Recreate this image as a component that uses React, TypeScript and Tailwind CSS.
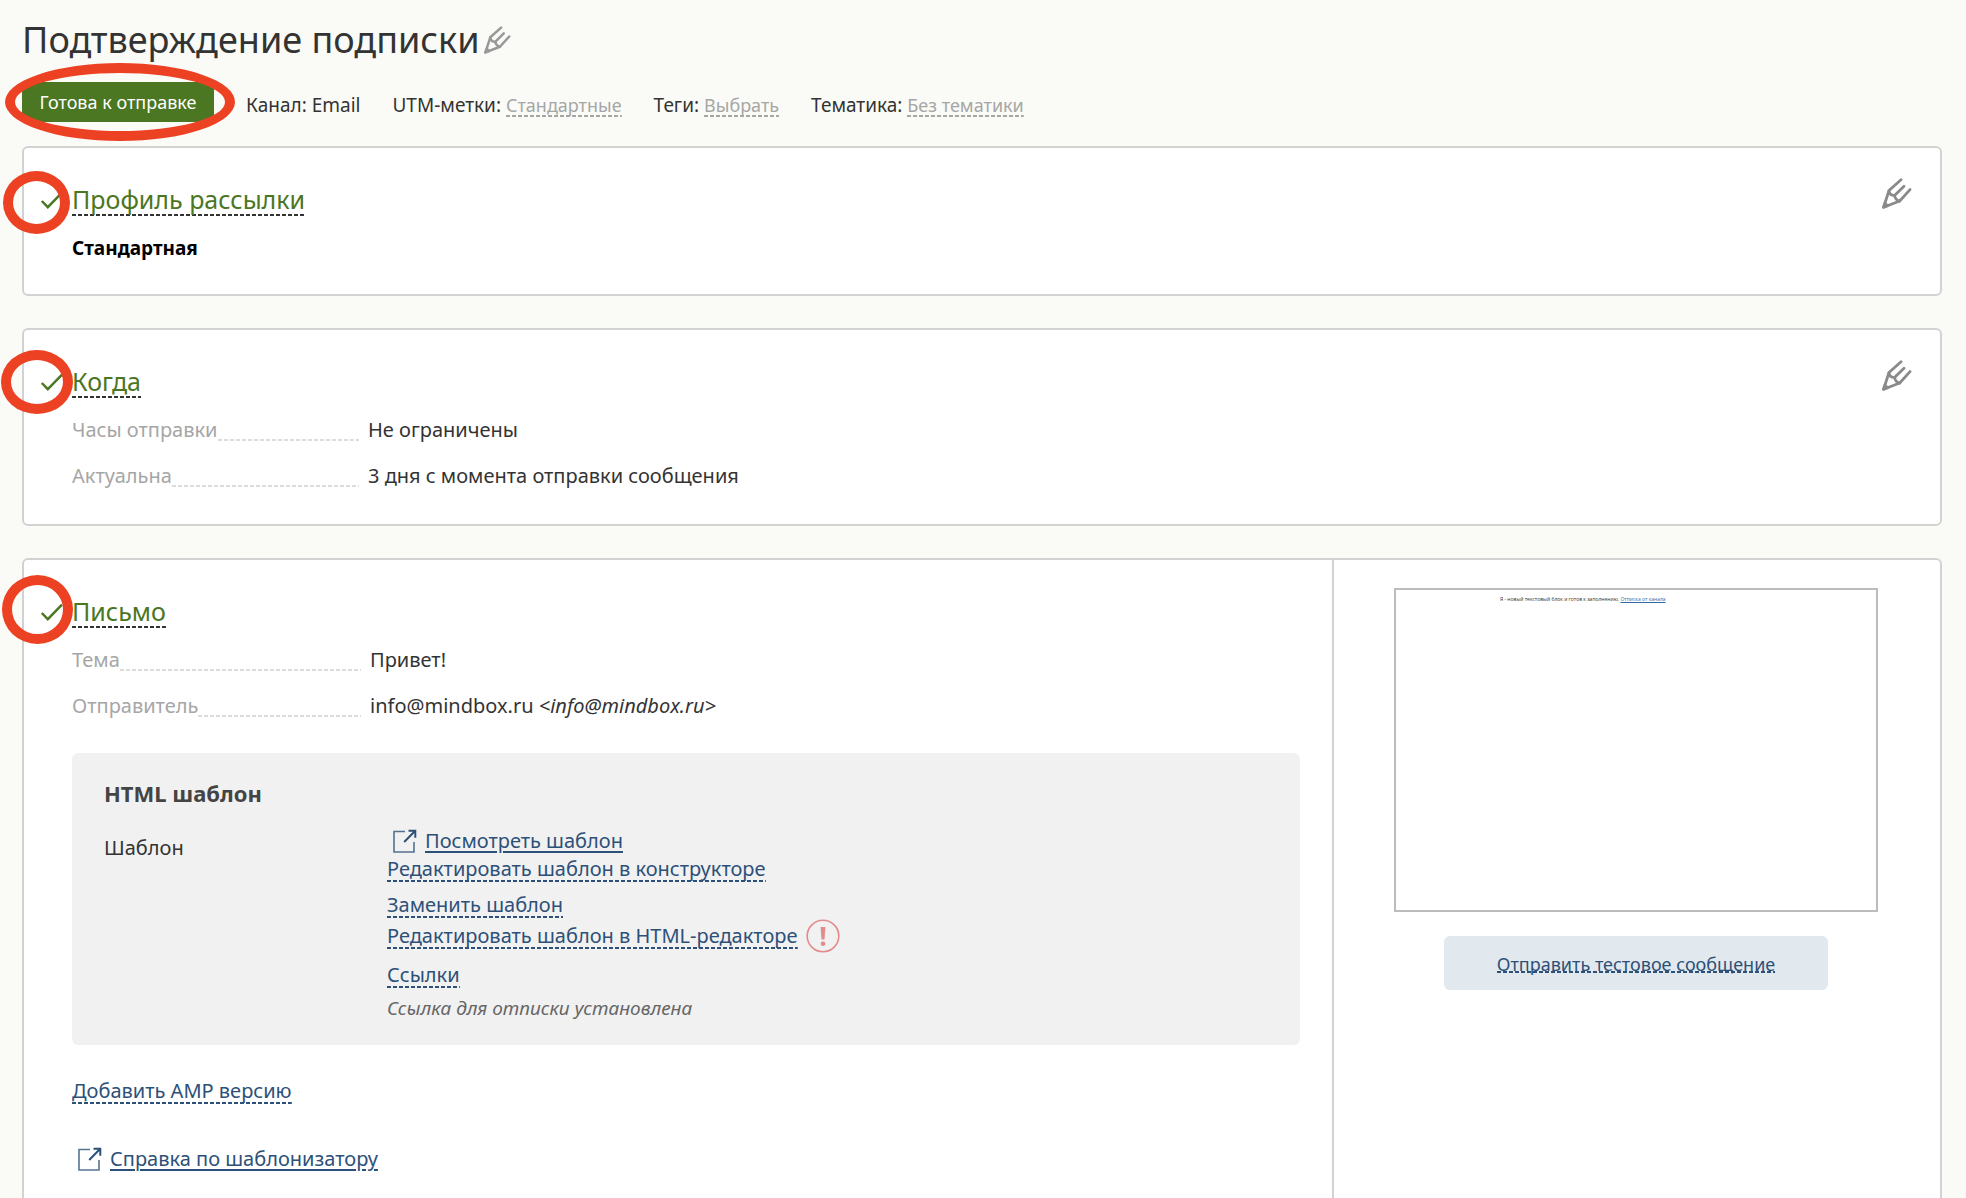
import React from 'react';
import clsx from 'clsx';

type IconProps = { className?: string };

const PencilIcon: React.FC<IconProps> = ({ className }) => (
  <svg viewBox="0 0 30 31" fill="none" stroke="currentColor" strokeWidth="2.8" strokeLinecap="round" strokeLinejoin="round" className={className}>
    <path d="M19 1.7 7 12.5 1.6 29.3 17.7 23 28 11.6" />
    <path d="M22 8.2 12.5 17.5" />
    <path d="M7 12.8c.4 3.2 2 4.7 5.5 4.7.6 3 2 5 5.2 5.5" />
    <path d="M1.6 29.3l1.3-4 2.8 2.4z" fill="currentColor" />
  </svg>
);

const CheckIcon: React.FC<IconProps> = ({ className }) => (
  <svg viewBox="0 0 24 20" fill="none" stroke="currentColor" strokeWidth="2.4" className={className}>
    <path d="M1.8 12l6 6.2L22 3.6" />
  </svg>
);

const ExternalIcon: React.FC<IconProps> = ({ className }) => (
  <svg viewBox="0 0 24 24" fill="none" stroke="currentColor" className={className}>
    <path d="M12 2.5H1v20.5h20V13" strokeWidth="1.6" opacity=".8" />
    <path d="M11.2 13 22 2M15.5 1.8h6.8v7" strokeWidth="2" />
  </svg>
);

const WarningIcon: React.FC<IconProps> = ({ className }) => (
  <svg viewBox="0 0 34 34" className={className}>
    <circle cx="17" cy="17" r="15.8" fill="none" stroke="currentColor" strokeWidth="1.6" />
    <path d="M14.6 8h4.8l-.9 12.4h-3z" fill="currentColor" />
    <circle cx="17" cy="24.8" r="2.3" fill="currentColor" />
  </svg>
);

const Dashed: React.FC<{ className?: string; children: React.ReactNode }> = ({ className, children }) => (
  <span
    className={clsx(
      'bg-[image:repeating-linear-gradient(to_right,currentColor_0_4px,transparent_4px_6px)] bg-[length:100%_2px] bg-no-repeat',
      className ?? 'bg-bottom',
    )}
  >
    {children}
  </span>
);

const ActionButton: React.FC<{ children: React.ReactNode }> = ({ children }) => (
  <button type="button" className="block cursor-pointer text-left leading-7 text-[#2d5078]">
    <Dashed>{children}</Dashed>
  </button>
);

const ExternalLink: React.FC<{ children: React.ReactNode }> = ({ children }) => (
  <div className="flex items-center gap-2 pl-1.5 leading-7 text-[#2d5078]">
    <ExternalIcon className="size-6 shrink-0" />
    <a href="#" className="underline decoration-2 underline-offset-3">{children}</a>
  </div>
);

const MetaItem: React.FC<{ label: string; children: React.ReactNode }> = ({ label, children }) => (
  <div>
    {label}: {children}
  </div>
);

const MetaButton: React.FC<{ children: React.ReactNode }> = ({ children }) => (
  <button type="button" className="cursor-pointer text-[18px] text-[#a6a6a6]">
    <Dashed>{children}</Dashed>
  </button>
);

type SectionHeadProps = { title: string; ring: string; editable?: boolean };

const SectionHead: React.FC<SectionHeadProps> = ({ title, ring, editable }) => (
  <div className="flex items-start justify-between pl-4 pr-7">
    <div className="flex items-center gap-2">
      <div className="relative">
        <CheckIcon className="h-5 w-6 text-[#4b7622]" />
        <span className={clsx('absolute z-10 rounded-[50%] border-10 border-[#ed4124]', ring)} />
      </div>
      <h2 className="text-[25px] leading-[34px] text-[#333]">
        <button type="button" className="cursor-pointer">
          <Dashed>
            <span className="text-[#4b7622]">{title}</span>
          </Dashed>
        </button>
      </h2>
    </div>
    {editable && (
      <button type="button" aria-label="Редактировать" className="-mt-1 cursor-pointer text-[#8a8a8a]">
        <PencilIcon className="h-[31px] w-[30px]" />
      </button>
    )}
  </div>
);

const Row: React.FC<{ label: string; width: string; children: React.ReactNode }> = ({ label, width, children }) => (
  <div className="flex h-[46px] items-center gap-[9px]">
    <dt className={clsx('flex h-full items-center text-[#a6a6a6]', width)}>
      {label}
      <span className="mb-3 h-0.5 flex-1 self-end bg-[image:repeating-linear-gradient(to_right,#dcdcdc_0_4px,transparent_4px_6px)]" />
    </dt>
    <dd>{children}</dd>
  </div>
);

const App: React.FC = () => {
  return (
    <main className="flex min-h-screen flex-col overflow-hidden bg-[#fafbf6] pl-[22px] pr-6 pt-[18px] font-['Noto_Sans','Open_Sans',sans-serif] text-[20px] text-[#333]">
      <header className="mb-6">
        <div className="flex items-center gap-1">
          <h1 className="text-[36px] leading-[44px]">Подтверждение подписки</h1>
          <button type="button" aria-label="Переименовать" className="cursor-pointer text-[#999]">
            <PencilIcon className="h-7 w-[27px]" />
          </button>
        </div>

        <div className="mt-5 flex items-center gap-8 leading-7">
          <div className="relative h-10 w-[192px] bg-[#4b7622] text-center text-[18px] leading-10 text-white">
            Готова к отправке
            <span className="absolute -inset-y-[19px] -left-[17px] -right-[21px] z-10 rounded-[50%] border-10 border-[#ed4124]" />
          </div>
          <div className="flex gap-8 pt-1.5 text-[19px]">
            <MetaItem label="Канал">Email</MetaItem>
            <MetaItem label="UTM-метки"><MetaButton>Стандартные</MetaButton></MetaItem>
            <MetaItem label="Теги"><MetaButton>Выбрать</MetaButton></MetaItem>
            <MetaItem label="Тематика"><MetaButton>Без тематики</MetaButton></MetaItem>
          </div>
        </div>
      </header>

      <section className="mb-8 rounded-md border-2 border-[#d2d2d2] bg-white pb-[23px] pt-[34px]">
        <SectionHead title="Профиль рассылки" ring="-left-[37px] -top-[18px] h-[63px] w-[67px]" editable />
        <p className="mt-[9px] pl-12 text-[19px] font-bold leading-[46px] text-black">Стандартная</p>
      </section>

      <section className="mb-8 rounded-md border-2 border-[#d2d2d2] bg-white pb-[25px] pt-[34px]">
        <SectionHead title="Когда" ring="-left-[39px] -top-[21px] h-16 w-[72px]" editable />
        <dl className="mt-[9px] pl-12">
          <Row label="Часы отправки" width="w-[287px]">Не ограничены</Row>
          <Row label="Актуальна" width="w-[287px]">3 дня с момента отправки сообщения</Row>
        </dl>
      </section>

      <section className="flex flex-1 rounded-t-md border-2 border-b-0 border-[#d2d2d2] bg-white">
        <div className="min-w-0 flex-1 pt-[34px]">
          <SectionHead title="Письмо" ring="-left-[38px] -top-[26px] h-[69px] w-[71px]" />
          <div className="pl-12 pr-8">
            <dl className="mt-[9px]">
              <Row label="Тема" width="w-[289px]">Привет!</Row>
              <Row label="Отправитель" width="w-[289px]">
                info@mindbox.ru <i>&lt;info@mindbox.ru&gt;</i>
              </Row>
            </dl>

            <div className="mt-6 rounded-md bg-[#f1f1f1] px-8 pb-[22px] pt-6">
              <h3 className="text-[22px] font-bold leading-8 text-[#444]">HTML шаблон</h3>
              <div className="mt-[18px] flex">
                <div className="w-[283px] shrink-0 pt-1.5 leading-[30px]">Шаблон</div>
                <div className="flex flex-col gap-2">
                  <div>
                    <ExternalLink>Посмотреть шаблон</ExternalLink>
                    <ActionButton>Редактировать шаблон в конструкторе</ActionButton>
                  </div>
                  <div>
                    <ActionButton>Заменить шаблон</ActionButton>
                    <div className="flex items-center gap-2">
                      <ActionButton>Редактировать шаблон в HTML-редакторе</ActionButton>
                      <WarningIcon className="size-[34px] text-[#e38b8b]" />
                    </div>
                  </div>
                  <div>
                    <ActionButton>Ссылки</ActionButton>
                    <p className="mt-1 text-[19px] italic leading-[30px] text-[#666]">Ссылка для отписки установлена</p>
                  </div>
                </div>
              </div>
            </div>

            <div className="mt-8">
              <ActionButton>Добавить AMP версию</ActionButton>
            </div>
            <div className="mt-10">
              <ExternalLink>Справка по шаблонизатору</ExternalLink>
            </div>
          </div>
        </div>

        <aside className="flex w-[608px] shrink-0 flex-col items-center border-l-2 border-[#d2d2d2] pr-0.5 pt-7">
          <div className="h-[324px] w-[484px] border-2 border-[#bcbcbc] pl-[104px] pt-[5px] font-['Open_Sans',sans-serif] text-[5px] leading-2">
            Я - новый текстовый блок и готов к заполнению. <a href="#" className="text-[#2f6ca8] underline">Отписка от канала</a>
          </div>
          <button type="button" className="mt-6 h-[54px] w-96 cursor-pointer rounded-md bg-[#e1e8ee] pt-0.5 text-[18px] text-[#2d5078]">
            <Dashed className="bg-[position:0_calc(100%-3px)]">Отправить тестовое сообщение</Dashed>
          </button>
        </aside>
      </section>
    </main>
  );
};

export default App;
